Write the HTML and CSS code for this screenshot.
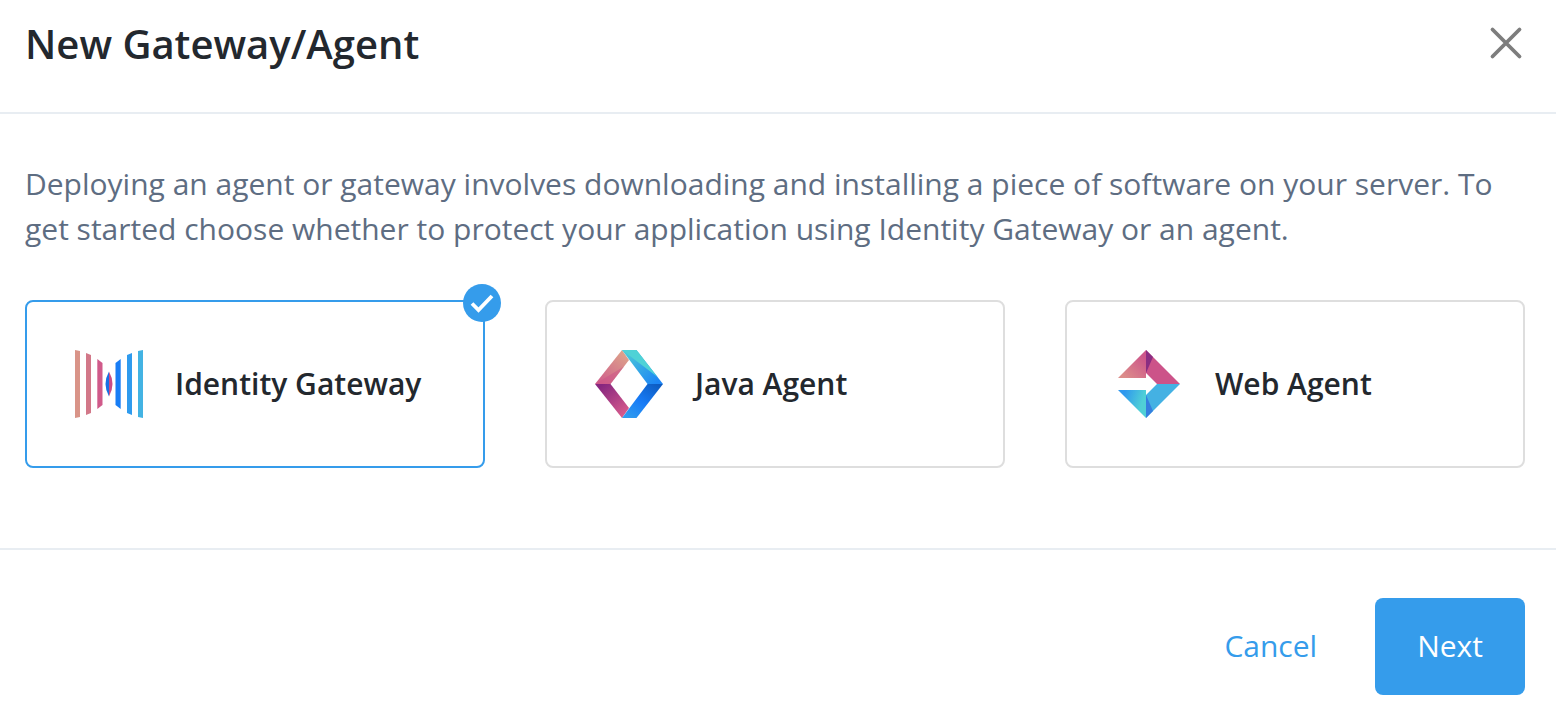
FILE: index.html
```html
<!DOCTYPE html>
<html lang="en">
<head>
<meta charset="utf-8">
<title>New Gateway/Agent</title>
<meta name="viewport" content="width=device-width, initial-scale=1">
<link rel="stylesheet" href="styles.css">
</head>
<body>
<form class="dialog" role="dialog" aria-labelledby="dialog-title">
  <header class="dialog-header">
    <h1 class="dialog-title" id="dialog-title">New Gateway/Agent</h1>
    <button class="close" type="button" aria-label="Close">
      <svg width="34" height="34" viewBox="0 0 34 34" fill="none" stroke="#7d7d7d" stroke-width="3.800" stroke-linecap="round"><path d="M3.500 3.500l27 27M30.500 3.500l-27 27"/></svg>
    </button>
  </header>

  <div class="dialog-body">
    <p class="intro">Deploying an agent or gateway involves downloading and installing a piece of software on your server. To get started choose whether to protect your application using Identity Gateway or an agent.</p>

    <div class="choices" role="radiogroup" aria-label="Type">
      <label class="card">
        <input class="card-input" type="radio" name="type" value="gateway" checked>
        <svg class="card-icon" viewBox="0 0 68 68" aria-hidden="true">
          <path fill="#d99488" d="M0 0l5 1v66l-5 1z"/>
          <path fill="#d27889" d="M11 3l5 2v58l-5 2z"/>
          <path fill="#d05a8a" d="M22.300 9l5.200 4v42l-5.200 4z"/>
          <path fill="#187df5" d="M45.700 9l-5.200 4v42l5.200 4z"/>
          <path fill="#2f9bee" d="M57 3l-5 2v58l5 2z"/>
          <path fill="#43b3e3" d="M68 0l-5 1v66l5 1z"/>
          <path fill="#176fe4" d="M34 21.500q-7 12.500 0 25z"/>
          <path fill="#c94b86" d="M34 21.500q7 12.500 0 25z"/>
        </svg>
        <span class="card-name">Identity Gateway</span>
        <svg class="card-check" viewBox="0 0 38 38" aria-hidden="true"><circle cx="19" cy="19" r="19" fill="#359ceb"/><path d="M9 19.500l6.500 6.500L29 12" fill="none" stroke="#fff" stroke-width="3.800"/></svg>
      </label>

      <label class="card">
        <input class="card-input" type="radio" name="type" value="java">
        <svg class="card-icon" viewBox="0 0 68 68" aria-hidden="true">
          <defs>
            <linearGradient id="java-a" gradientUnits="userSpaceOnUse" x1="30" y1="2" x2="7" y2="34"><stop offset="0" stop-color="#dda48b"/><stop offset="1" stop-color="#d0608b"/></linearGradient>
            <linearGradient id="java-b" gradientUnits="userSpaceOnUse" x1="32" y1="5" x2="60" y2="34"><stop offset="0" stop-color="#49c5d9"/><stop offset="1" stop-color="#1d86f5"/></linearGradient>
            <linearGradient id="java-c" gradientUnits="userSpaceOnUse" x1="60" y1="32" x2="34" y2="68"><stop offset="0" stop-color="#0d5bc0"/><stop offset=".55" stop-color="#187cf7"/><stop offset="1" stop-color="#2f9bee"/></linearGradient>
            <linearGradient id="java-d" gradientUnits="userSpaceOnUse" x1="8" y1="34" x2="31" y2="63"><stop offset="0" stop-color="#86267f"/><stop offset="1" stop-color="#d65a8c"/></linearGradient>
          </defs>
          <path fill="url(#java-a)" d="M27 0l7 10-18.500 24H0z"/>
          <path fill="#cb5087" opacity=".45" d="M0 34l29-17.500L15.500 34z"/>
          <path fill="url(#java-b)" d="M27 0h14.500L68 34H52.500z"/>
          <path fill="#4fd2d6" d="M27 0h14.500l21 27z"/>
          <path fill="url(#java-d)" d="M0 34h15.500L34 58l-7 10z"/>
          <path fill="url(#java-c)" d="M52.500 34H68L41.500 68H27z"/>
        </svg>
        <span class="card-name">Java Agent</span>
      </label>

      <label class="card">
        <input class="card-input" type="radio" name="type" value="web">
        <svg class="card-icon" viewBox="0 0 68 68" aria-hidden="true">
          <defs>
            <linearGradient id="web-a" gradientUnits="userSpaceOnUse" x1="10" y1="28" x2="30" y2="8"><stop offset="0" stop-color="#dc8d8a"/><stop offset="1" stop-color="#cd568a"/></linearGradient>
            <linearGradient id="web-b" gradientUnits="userSpaceOnUse" x1="9" y1="44" x2="28" y2="50"><stop offset="0" stop-color="#2f98ee"/><stop offset="1" stop-color="#50d0d6"/></linearGradient>
          </defs>
          <path fill="url(#web-a)" d="M31 0v28H3z"/>
          <path fill="#cc5389" d="M31 0l34 34H42L31 23z"/>
          <path fill="#8a2d82" d="M31 0l7 7-7 16z"/>
          <path fill="url(#web-b)" d="M3 40h28v28z"/>
          <path fill="#44b1e3" d="M65 34L31 68V45l11-11z"/>
          <path fill="#347fdf" d="M31 45l7 16-7 7z"/>
        </svg>
        <span class="card-name">Web Agent</span>
      </label>
    </div>
  </div>

  <footer class="dialog-footer">
    <button class="button button-link" type="button">Cancel</button>
    <button class="button button-primary" type="submit">Next</button>
  </footer>
</form>
</body>
</html>
```
FILE: styles.css
```css
* { box-sizing: border-box; }

body {
  margin: 0;
  background: #fff;
  color: #23282e;
  font-family: "Open Sans", "Noto Sans", sans-serif;
  font-size: 30px;
  line-height: 45px;
}

.dialog-header {
  display: flex;
  align-items: flex-start;
  justify-content: space-between;
  padding: 16px 33px 40px 25px;
  border-bottom: 2px solid #e8edf2;
}

.dialog-title {
  margin: 0;
  font-size: 40px;
  font-weight: 600;
  line-height: 56px;
}

.close {
  display: flex;
  padding: 10px 0;
  border: 0;
  background: none;
  cursor: pointer;
}

.dialog-body { padding: 47px 31px 80px 25px; }

.intro {
  margin: 0 0 49px;
  color: #5e6d82;
}

.choices {
  display: grid;
  grid-template-columns: repeat(3, 1fr);
  gap: 60px;
}

.card {
  position: relative;
  display: flex;
  align-items: center;
  gap: 32px;
  padding: 48px;
  border: 2px solid #dedede;
  border-radius: 8px;
  font-weight: 600;
  cursor: pointer;
}

.card:has(.card-input:checked) { border-color: #359ceb; }

.card-input {
  position: absolute;
  inset: 0;
  width: 100%;
  height: 100%;
  margin: 0;
  opacity: 0;
}

.card-icon {
  flex: none;
  width: 68px;
  height: 68px;
}

.card-name {
  padding-bottom: 2px;
  white-space: nowrap;
}

.card-check {
  position: absolute;
  top: -18px;
  right: -18px;
  width: 38px;
  height: 38px;
}

.dialog-footer {
  display: flex;
  justify-content: flex-end;
  gap: 16px;
  padding: 48px 31px 29px 25px;
  border-top: 2px solid #e8edf2;
}

.button {
  padding: 25px 42px 27px;
  border: 0;
  border-radius: 8px;
  font: inherit;
  cursor: pointer;
}

.button-link {
  background: none;
  color: #359ceb;
}

.button-primary {
  background: #359ceb;
  color: #fff;
}
```
